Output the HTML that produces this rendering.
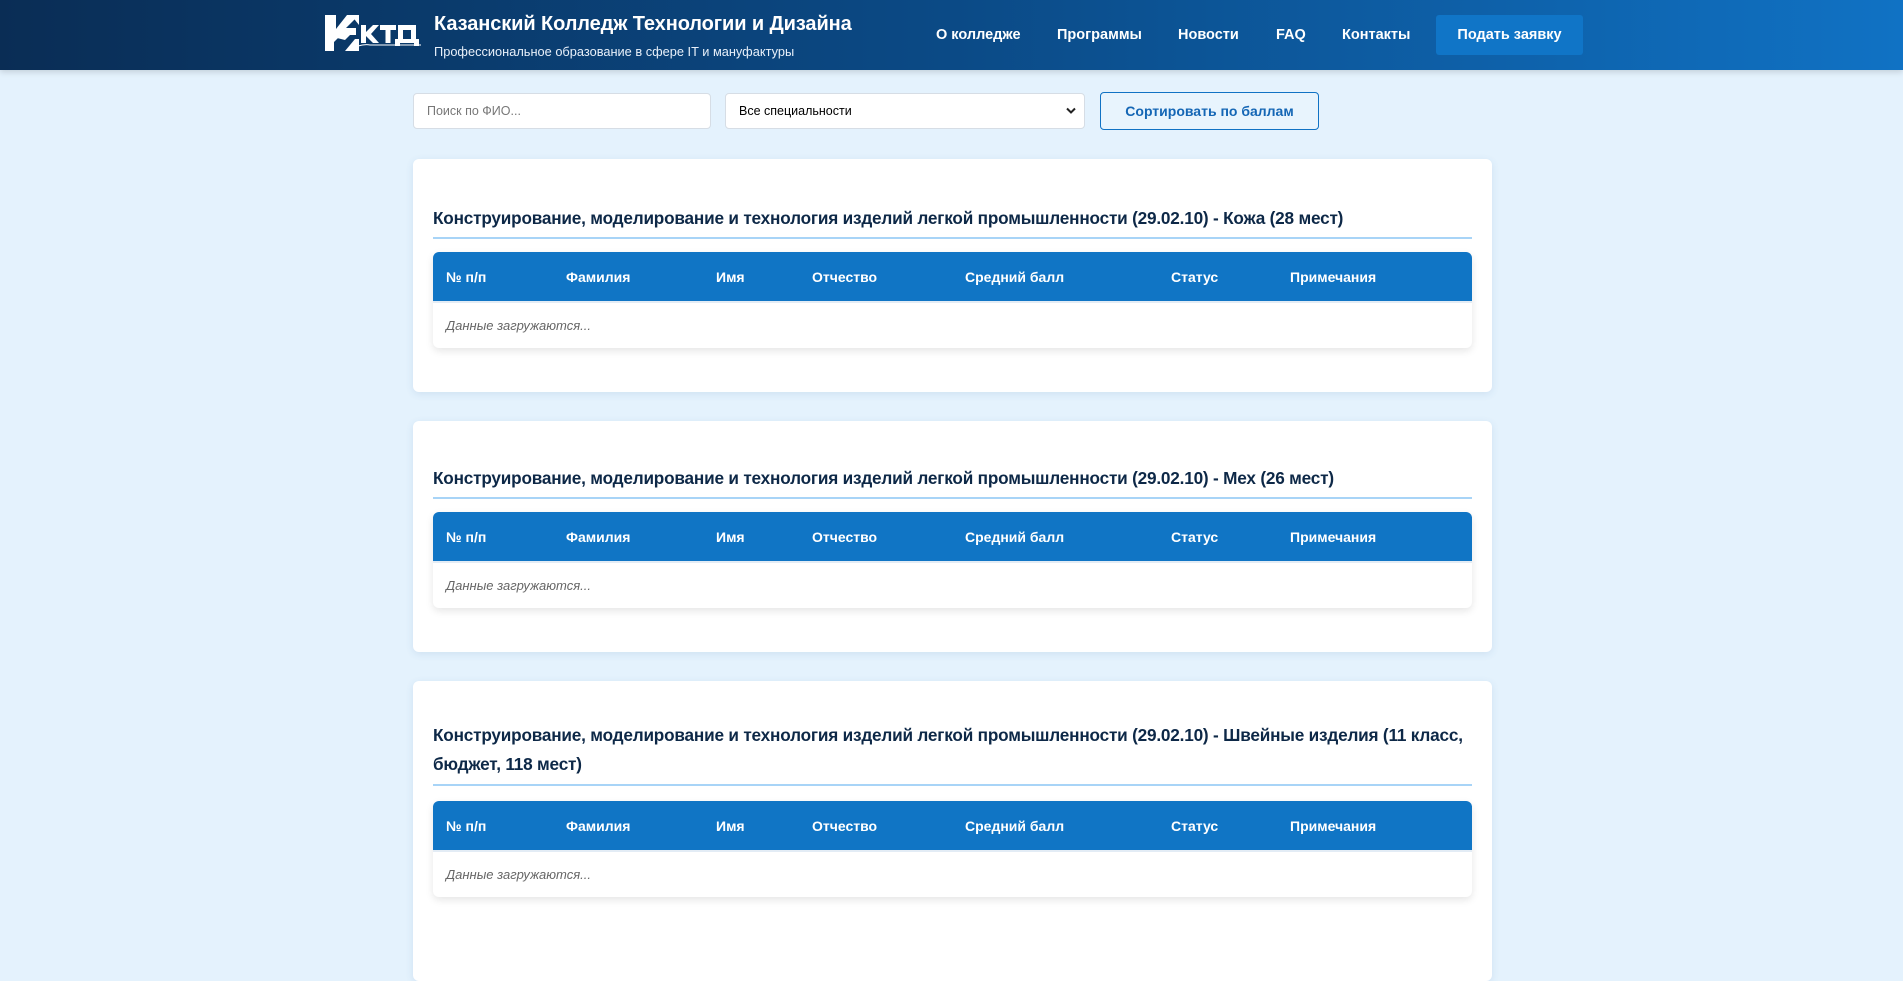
<!DOCTYPE html>
<html><head><meta charset="utf-8"><style>
*{box-sizing:border-box;margin:0;padding:0}
body{width:1903px;height:919px;overflow:hidden;background:#e4f2fd;font-family:"Liberation Sans",sans-serif;position:relative}
.hdr{position:absolute;left:0;top:0;width:1903px;height:70px;background:linear-gradient(90deg,#0a2d55 0%,#0b4a86 50%,#1072c4 100%);box-shadow:0 2px 6px rgba(0,0,0,.15)}
.t1{position:absolute;left:434px;top:13px;color:#fff;font-weight:bold;font-size:20px;letter-spacing:-.1px}
.t2{position:absolute;left:434px;top:44px;color:#e8f0fa;font-size:12.8px}
.nav{position:absolute;top:27px;color:#fff;font-weight:bold;font-size:14.5px}
.btn{position:absolute;left:1436px;top:15px;width:147px;height:40px;background:#1075c7;border-radius:3px;color:#fff;font-weight:bold;font-size:14.5px;text-align:center;line-height:40px}
.inp{position:absolute;top:93px;height:36px;background:#fff;border:1px solid #d6dde5;border-radius:4px;font-size:12.5px;line-height:34px;padding-left:13px}
.sort{position:absolute;left:1100px;top:92px;width:219px;height:38px;border:1px solid #1072c4;border-radius:4px;color:#1466b5;font-weight:bold;font-size:14px;text-align:center;line-height:36px;background:#e8f4fd}
.card{position:absolute;left:413px;width:1079px;background:#fff;border-radius:6px;box-shadow:0 2px 8px rgba(60,110,160,.12);padding:0 20px}
.ct{position:absolute;left:20px;color:#0d2847;font-weight:bold;font-size:17.2px;line-height:29px;letter-spacing:-.2px;white-space:nowrap}
.hr{position:absolute;left:20px;right:20px;height:2px;background:#a8d4f7}
.tbl{position:absolute;left:20px;right:20px;height:96px;border-radius:6px;background:#fff;box-shadow:0 3px 8px rgba(0,0,0,.1);overflow:hidden}
.th{height:51px;background:#1075c5;position:relative;border-bottom:2px solid #e3ecf5}
.th span{position:absolute;top:17px;color:#fff;font-weight:bold;font-size:14px}
.ld{position:absolute;left:13px;top:66px;font-style:italic;color:#666;font-size:13px}
</style></head><body>
<div class="hdr">
<svg style="position:absolute;left:325px;top:15px" width="97" height="36" viewBox="0 0 97 36">
<path d="M0 0H11V14L22 0H34L21 13H31V20H16L9 27V36H0Z" fill="#fff"/>
<path d="M12 23L20 15H30L20 25Z" fill="#fff"/>
<path d="M20 36L30 24L34 24L34 36Z" fill="#fff"/>
<path d="M26 0H34V10Z" fill="#fff"/>
<path d="M36 10H41V17L48 10H54L46 19L54 28H48L41 21V28H36Z" fill="#fff"/>
<path d="M55 10H71V15H65.5V28H60.5V15H55Z" fill="#fff"/>
<path d="M73 10H91V24H94V31H89V28H75V31H70V24H73ZM78 15V24H86V15Z" fill="#fff"/>
<path d="M33 31Q40 29 45 30L96 30" stroke="#fff" stroke-width="1" fill="none"/>
</svg>
<div class="t1">Казанский Колледж Технологии и Дизайна</div>
<div class="t2">Профессиональное образование в сфере IT и мануфактуры</div>
<div class="nav" style="left:936px">О колледже</div>
<div class="nav" style="left:1057px">Программы</div>
<div class="nav" style="left:1178px">Новости</div>
<div class="nav" style="left:1276px">FAQ</div>
<div class="nav" style="left:1342px">Контакты</div>
<div class="btn">Подать заявку</div>
</div>
<div class="inp" style="left:413px;width:298px;color:#777">Поиск по ФИО...</div>
<div class="inp" style="left:725px;width:360px;color:#000">Все специальности<svg style="position:absolute;right:8px;top:13px" width="10" height="8" viewBox="0 0 10 8"><path d="M1 1.5L5 5.5L9 1.5" stroke="#222" stroke-width="2" fill="none"/></svg></div>
<div class="sort">Сортировать по баллам</div>

<div class="card" style="top:159px;height:233px">
<div class="ct" style="top:45px">Конструирование, моделирование и технология изделий легкой промышленности (29.02.10) - Кожа (28 мест)</div>
<div class="hr" style="top:78px"></div>
<div class="tbl" style="top:93px"><div class="th"><span style="left:13px">№ п/п</span><span style="left:133px">Фамилия</span><span style="left:283px">Имя</span><span style="left:379px">Отчество</span><span style="left:532px">Средний балл</span><span style="left:738px">Статус</span><span style="left:857px">Примечания</span></div><div class="ld">Данные загружаются...</div></div>
</div>

<div class="card" style="top:421px;height:231px">
<div class="ct" style="top:43px">Конструирование, моделирование и технология изделий легкой промышленности (29.02.10) - Мех (26 мест)</div>
<div class="hr" style="top:76px"></div>
<div class="tbl" style="top:91px"><div class="th"><span style="left:13px">№ п/п</span><span style="left:133px">Фамилия</span><span style="left:283px">Имя</span><span style="left:379px">Отчество</span><span style="left:532px">Средний балл</span><span style="left:738px">Статус</span><span style="left:857px">Примечания</span></div><div class="ld">Данные загружаются...</div></div>
</div>

<div class="card" style="top:681px;height:300px">
<div class="ct" style="top:40px">Конструирование, моделирование и технология изделий легкой промышленности (29.02.10) - Швейные изделия (11 класс,<br>бюджет, 118 мест)</div>
<div class="hr" style="top:103px"></div>
<div class="tbl" style="top:120px"><div class="th"><span style="left:13px">№ п/п</span><span style="left:133px">Фамилия</span><span style="left:283px">Имя</span><span style="left:379px">Отчество</span><span style="left:532px">Средний балл</span><span style="left:738px">Статус</span><span style="left:857px">Примечания</span></div><div class="ld">Данные загружаются...</div></div>
</div>
</body></html>
